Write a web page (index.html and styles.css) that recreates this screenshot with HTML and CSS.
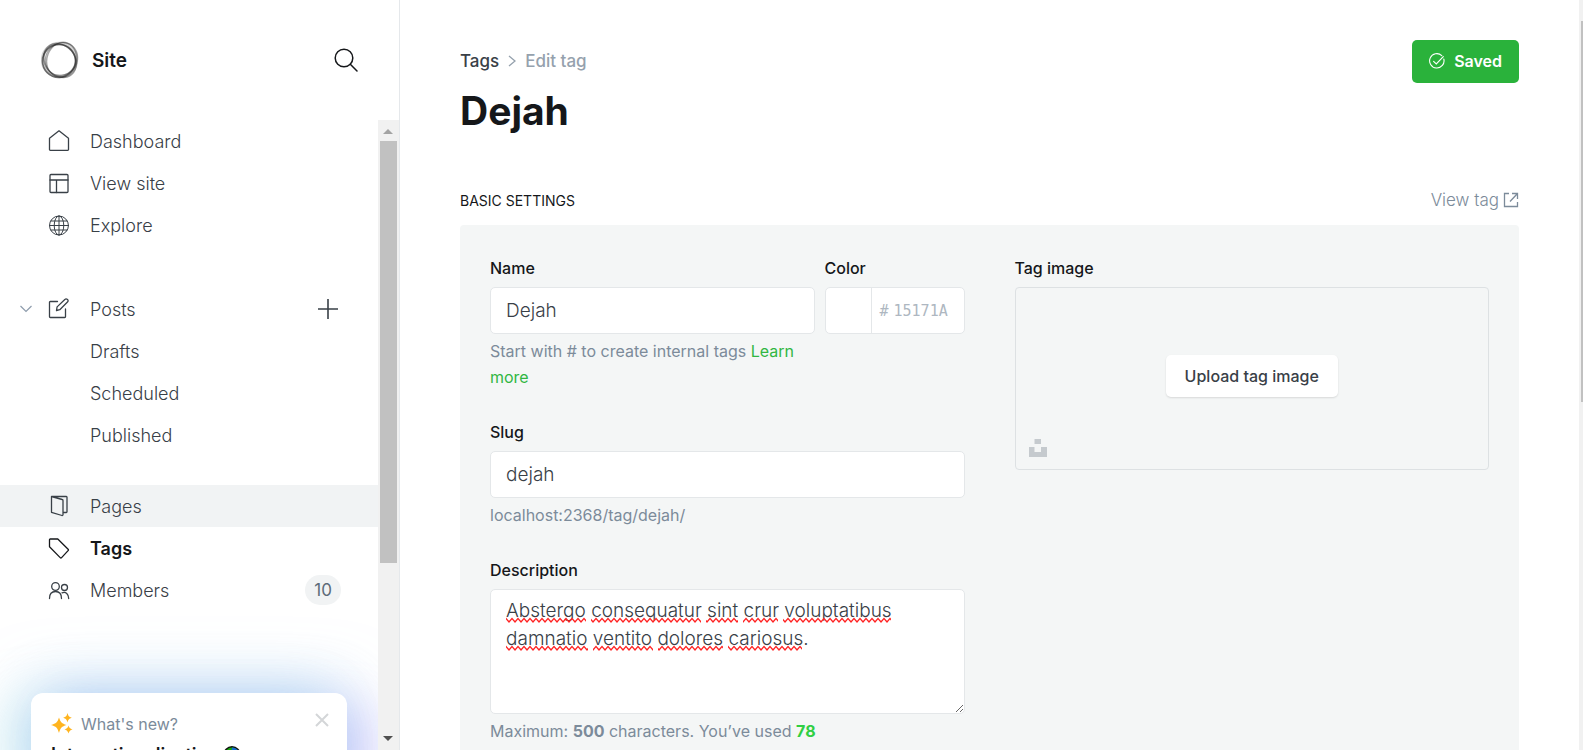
FILE: index.html
```html
<!DOCTYPE html>
<html lang="en">
<head>
<meta charset="utf-8">
<title>Site - Edit tag</title>
<link rel="stylesheet" href="styles.css">
</head>
<body>
<div class="app">
  <aside class="sidebar">
    <header class="sidebar-head">
      <svg class="logo" viewBox="0 0 38 38" aria-hidden="true">
        <g fill="none" stroke="#222">
          <ellipse cx="18" cy="20" rx="16.500" ry="16.500" stroke-width="1.600" opacity=".6"/>
          <ellipse cx="20.500" cy="18" rx="17" ry="15.500" transform="rotate(-48 20.500 18)" stroke-width="1.200" opacity=".4"/>
          <ellipse cx="19" cy="19.500" rx="18" ry="15" transform="rotate(50 19 19.500)" stroke-width="1.600" opacity=".45"/>
          <ellipse cx="20.500" cy="18.500" rx="17.500" ry="14.500" transform="rotate(110 20.500 18.500)" stroke-width="1.400" opacity=".4"/>
          <ellipse cx="18.500" cy="19" rx="17" ry="16.500" stroke-width="3.400" opacity=".2"/>
        </g>
      </svg>
      <span class="site-name">Site</span>
      <button class="icon-btn search" type="button" aria-label="Search">
        <svg width="24" height="24" viewBox="0 0 24 24" fill="none" stroke="#15171a" stroke-width="1.500" stroke-linecap="round"><circle cx="10" cy="10" r="8.800"/><path d="M16.300 16.300 23 23"/></svg>
      </button>
    </header>
    <div class="sidebar-body">
      <div class="nav-scroll">
        <nav>
          <ul class="nav-list">
            <li><a href="#" class="nav-item">
              <svg class="nav-icon" viewBox="0 0 22 22"><path d="M1.500 8.300 11 .800l9.500 7.500v11.200a.8.8 0 0 1-.8.8H2.300a.8.8 0 0 1-.8-.8z"/></svg>
              <span>Dashboard</span></a></li>
            <li><a href="#" class="nav-item">
              <svg class="nav-icon" viewBox="0 0 22 22"><rect x="2" y="2.500" width="18" height="18" rx="1"/><path d="M2 8h18M8.500 8v12.500"/></svg>
              <span>View site</span></a></li>
            <li><a href="#" class="nav-item">
              <svg class="nav-icon thin" viewBox="0 0 22 22"><circle cx="11" cy="11.500" r="9.500"/><ellipse cx="11" cy="11.500" rx="4.800" ry="9.500"/><path d="M1.500 11.500h19M11 2v19M2.800 7h16.400M2.800 16h16.400"/></svg>
              <span>Explore</span></a></li>
          </ul>
          <ul class="nav-list">
            <li class="posts-row">
              <button class="icon-btn" type="button" aria-label="Collapse posts"><svg width="12" height="8" viewBox="0 0 12 8" fill="none" stroke="#8e9cac" stroke-width="1.200"><path d="M.5 1 6 6.500 11.500 1"/></svg></button>
              <a href="#" class="nav-item">
              <svg class="nav-icon" viewBox="0 0 22 22"><path d="M9.500 3.500H2.300a.8.800 0 0 0-.8.8v14.400a.8.800 0 0 0 .8.800h14.400a.8.800 0 0 0 .8-.8V11"/><path d="m8.500 12.500.6-3.600 8-7.700a1.400 1.400 0 0 1 2 0l.6.600a1.400 1.400 0 0 1 0 2l-7.900 7.900z"/></svg>
              <span>Posts</span></a>
              <button class="icon-btn" type="button" aria-label="New post"><svg width="22" height="22" viewBox="0 0 22 22" fill="none" stroke="#394047" stroke-width="1.600"><path d="M11 1v20M1 11h20"/></svg></button>
            </li>
            <li><a href="#" class="nav-item sub">Drafts</a></li>
            <li><a href="#" class="nav-item sub">Scheduled</a></li>
            <li><a href="#" class="nav-item sub">Published</a></li>
          </ul>
          <ul class="nav-list">
            <li><a href="#" class="nav-item hovered">
              <svg class="nav-icon" viewBox="0 0 22 22"><path d="M3.500 1.500h14.800a.7.700 0 0 1 .7.700v14.600a.7.700 0 0 1-.7.700h-3.300M3.500 1.500v15.800l10.500 3.200a.8.800 0 0 0 1-.8V5.500a1 1 0 0 0-.8-1z"/></svg>
              <span>Pages</span></a></li>
            <li><a href="#" class="nav-item current">
              <svg class="nav-icon" viewBox="0 0 22 22"><path d="M1.500 2.700a.7.700 0 0 1 .7-.7h7.600l10.300 10.200a1 1 0 0 1 0 1.400l-6.500 7a1 1 0 0 1-1.400 0L1.500 9.800z"/></svg>
              <span>Tags</span></a></li>
            <li><a href="#" class="nav-item">
              <svg class="nav-icon" viewBox="0 0 22 22"><circle cx="7.500" cy="7.500" r="3.800"/><circle cx="16.500" cy="8.500" r="3"/><path d="M1.500 19.500c0-4.500 2.400-7 6-7s6 2.500 6 7M14 13.800c3.800-1.600 6.700 1.300 6.700 5.700"/></svg>
              <span>Members</span><span class="count">10</span></a></li>
          </ul>
        </nav>
        <section class="news">
          <div class="news-head">
            <svg width="22" height="22" viewBox="0 0 22 22" fill="#ffb41f" aria-hidden="true"><path d="M8 4.500c1.500 4.700 2.800 6 7.500 7.500-4.700 1.500-6 2.800-7.500 8-1.500-5.200-2.800-6.500-8-8 5.200-1.500 6.500-2.800 8-7.500zM16.500 0c.8 3.100 1.600 3.900 4.500 4.800-2.900.9-3.700 1.700-4.500 4.700-.8-3-1.600-3.800-4.500-4.700 2.900-.9 3.700-1.700 4.500-4.800zM17.500 12.500c.7 2.400 1.500 3.200 4 4-2.500.8-3.300 1.600-4 4-.7-2.400-1.500-3.200-4-4 2.500-.8 3.300-1.600 4-4z"/></svg>
            <span>What's new?</span>
            <button class="icon-btn close" type="button" aria-label="Dismiss"><svg width="14" height="14" viewBox="0 0 14 14" fill="none" stroke="#d4d6d8" stroke-width="2"><path d="m1 1 12 12M13 1 1 13"/></svg></button>
          </div>
          <h2 class="news-title">Internationalisation
            <svg width="18" height="18" viewBox="0 0 18 18" aria-hidden="true"><circle cx="9" cy="9" r="8.200" fill="#16a80c" stroke="#111" stroke-width="1.500"/><path d="M9 1.500c4 0 7 2.500 7.500 7l-3 3-2-4-3-2z" fill="#1769d2"/></svg>
          </h2>
        </section>
      </div>
      <div class="scrollbar" aria-hidden="true">
        <svg width="20" height="21" viewBox="0 0 20 21"><path d="M5 14h10l-5-5z" fill="#a3a3a3"/></svg>
        <div class="thumb"></div>
        <svg width="20" height="21" viewBox="0 0 20 21"><path d="M5 7h10l-5 5z" fill="#505050"/></svg>
      </div>
    </div>
  </aside>
  <main class="main">
    <header class="page-head">
      <div>
        <nav class="crumbs" aria-label="Breadcrumb">
          <a href="#">Tags</a>
          <svg width="8" height="12" viewBox="0 0 8 12" fill="none" stroke="#95a1ad" stroke-width="1.300" aria-hidden="true"><path d="m1 1 6 5-6 5"/></svg>
          <span>Edit tag</span>
        </nav>
        <h1 class="page-title">Dejah</h1>
      </div>
      <button class="save" type="button">
        <svg width="16" height="16" viewBox="0 0 16 16" fill="none" stroke="#fff" stroke-width="1.100" stroke-linecap="round" aria-hidden="true"><path d="M14.800 6A7.200 7.200 0 1 1 12.800 2.600M4.600 8.300l2.700 2.700 7-7.300"/></svg>
        <span>Saved</span>
      </button>
    </header>
    <div class="section-head">
      <h2 class="section-title">Basic settings</h2>
      <a href="#" class="view-tag">View tag
        <svg width="16" height="16" viewBox="0 0 16 16" fill="none" stroke="#7c8b9a" stroke-width="1.300" aria-hidden="true"><path d="M6 1.500H1.500v13h13V10M9 1.500h5.500V7M14.500 1.500l-7.500 8"/></svg>
      </a>
    </div>
    <form class="panel">
      <div class="column">
        <div class="name-row">
          <div class="field grow">
            <label for="name">Name</label>
            <input id="name" class="control" type="text" value="Dejah">
            <p class="hint">Start with # to create internal tags <a href="#">Learn more</a></p>
          </div>
          <div class="field color-field">
            <label for="color">Color</label>
            <div class="color-box">
              <span class="swatch"></span>
              <span>#</span>
              <input id="color" type="text" placeholder="15171A">
            </div>
          </div>
        </div>
        <div class="field">
          <label for="slug">Slug</label>
          <input id="slug" class="control" type="text" value="dejah">
          <p class="hint">localhost:2368/tag/dejah/</p>
        </div>
        <div class="field">
          <label for="description">Description</label>
          <div class="area-wrap">
            <textarea id="description" class="control area" spellcheck="false">Abstergo consequatur sint crur voluptatibus damnatio ventito dolores cariosus.</textarea>
            <svg class="spelling" width="400" height="64" aria-hidden="true">
              <defs><pattern id="wave" width="6" height="28" patternUnits="userSpaceOnUse"><path d="M-3 5 0 1.500 3 5 6 1.500 9 5" fill="none" stroke="#f22" stroke-width="1.400"/></pattern></defs>
              <g fill="url(#wave)"><rect y="28" width="80" height="6"/><rect x="85" y="28" width="110" height="6"/><rect x="200" y="28" width="32" height="6"/><rect x="237" y="28" width="35" height="6"/><rect x="277" y="28" width="108" height="6"/>
              <rect y="56" width="82" height="6"/><rect x="87" y="56" width="60" height="6"/><rect x="152" y="56" width="65" height="6"/><rect x="222" y="56" width="74" height="6"/></g>
            </svg>
          </div>
          <p class="hint">Maximum: <b>500</b> characters. You’ve used <b class="used">78</b></p>
        </div>
      </div>
      <div class="column">
        <div class="field">
          <label for="upload">Tag image</label>
          <div class="dropzone">
            <button id="upload" class="upload" type="button">Upload tag image</button>
            <svg class="unsplash" width="18" height="18" viewBox="0 0 18 18" fill="#c5cace" aria-hidden="true"><path d="M5.500 0h6.500v5H5.500zM0 8h5.500v5H12V8h6v10H0z"/></svg>
          </div>
        </div>
      </div>
    </form>
  </main>
  <div class="page-scroll" aria-hidden="true"><div class="page-thumb"></div></div>
</div>
</body>
</html>
```
FILE: styles.css
```css
* { box-sizing: border-box; }
body { margin: 0; background: #fff; color: #15171a; font-family: Inter, "Open Sans", sans-serif; font-size: 16px; }
button, input, textarea { font: inherit; }
a { color: inherit; text-decoration: none; }
h1, h2, p, ul { margin: 0; padding: 0; }
ul { list-style: none; }
svg { display: block; flex: none; }
.icon-btn { display: flex; padding: 0; border: 0; background: none; }

.app { display: flex; height: 100vh; overflow: hidden; }
.sidebar { display: flex; flex-direction: column; flex: 0 0 400px; border-right: 1px solid #e5e8eb; }
.sidebar-head { display: flex; align-items: center; height: 120px; padding: 0 41px; }
.logo { width: 38px; height: 38px; }
.site-name { margin-left: 13px; font-size: 19px; font-weight: 600; }
.search { margin-left: auto; }
.sidebar-body { display: flex; flex: 1; min-height: 0; }
.nav-scroll { flex: 1; overflow: hidden; }
.nav-list { margin-bottom: 29px; }
.nav-list:first-child { margin-bottom: 42px; }
.nav-item { display: flex; align-items: center; height: 42px; padding: 0 37px 0 48px; font-size: 18px; font-weight: 300; color: #394047; }
.nav-icon { width: 22px; height: 22px; margin-right: 20px; fill: none; stroke: #394047; stroke-width: 1.3; stroke-linejoin: round; stroke-linecap: round; }
.nav-icon.thin { stroke-width: 1; }
.sub { padding-left: 90px; }
.posts-row { display: flex; align-items: center; padding-left: 20px; padding-right: 39px; }
.posts-row .nav-item { flex: 1; padding: 0 0 0 16px; }
.hovered { background: #f1f3f4; }
.current { font-weight: 600; color: #15171a; }
.current .nav-icon { stroke: #15171a; }
.count { margin-left: auto; padding: 0 9px; border-radius: 15px; background: #f1f3f4; color: #5d6b79; font-size: 17px; font-weight: 400; line-height: 30px; }
.news { margin: 82px 31px 0; padding: 20px; border-radius: 12px; background: #fff; box-shadow: 0 0 64px rgba(120, 175, 235, .6), -24px 8px 56px rgba(160, 240, 225, .25), 28px 16px 48px rgba(190, 150, 255, .3); }
.news-head { display: flex; align-items: center; gap: 8px; height: 22px; font-size: 16px; font-weight: 400; color: #7c8b9a; }
.close { margin: 0 -2px 8px auto; }
.news-title { display: flex; align-items: center; gap: 4px; margin-top: 7px; font-size: 18px; font-weight: 600; line-height: 26px; }
.scrollbar { display: flex; flex-direction: column; flex: 0 0 21px; background: #f1f1f1; }
.thumb { height: 67%; margin: 0 2px; background: #c1c1c1; }
.scrollbar svg:last-child { margin-top: auto; }

.main { flex: 1; min-width: 0; padding: 40px 60px 0; }
.page-head { display: flex; justify-content: space-between; align-items: flex-start; }
.crumbs { display: flex; align-items: center; gap: 9px; height: 42px; font-size: 17px; font-weight: 500; color: #95a1ad; }
.crumbs a { color: #394047; }
.page-title { font-size: 39px; font-weight: 700; line-height: 58px; }
.save { display: flex; align-items: center; gap: 9px; height: 43px; padding: 0 17px 1px; border: 0; border-radius: 5px; background: #2ab23b; color: #fff; font-weight: 600; }
.section-head { display: flex; align-items: center; justify-content: space-between; height: 32px; margin: 44px 0 9px; }
.section-title { font-size: 14px; font-weight: 400; text-transform: uppercase; }
.view-tag { display: flex; align-items: center; gap: 4px; color: #7c8b9a; font-size: 17px; font-weight: 300; }
.panel { display: flex; gap: 50px; height: 100%; padding: 30px; border-radius: 4px; background: #f4f6f6; }
.column { flex: 1; min-width: 0; }
.field { margin-bottom: 28px; }
.field label { display: block; margin-bottom: 6px; line-height: 26px; font-size: 16px; font-weight: 500; }
.name-row { display: flex; gap: 10px; }
.grow { flex: 1; min-width: 0; }
.color-field { flex: 0 0 140px; min-width: 0; }
.control { display: block; width: 100%; height: 47px; padding: 0 15px; border: 1px solid #e4e7e9; border-radius: 5px; outline: 0; background: #fff; color: #394047; font-size: 19px; font-weight: 300; }
.hint { margin-top: 4px; padding-bottom: 1px; font-size: 16px; font-weight: 400; line-height: 26px; color: #7c8b9a; }
.hint a { color: #30b643; }
.hint b { font-weight: 700; }
.hint .used { color: #30cf43; }
.color-box { display: flex; align-items: center; height: 47px; border: 1px solid #e4e7e9; border-radius: 5px; background: #fff; color: #aeb7c1; font-family: "DejaVu Sans Mono", monospace; font-size: 15px; }
.swatch { align-self: stretch; width: 46px; margin-right: 8px; border-right: 1px solid #e4e7e9; }
.color-box input { flex: 1; min-width: 0; padding: 0 0 0 5px; border: 0; outline: 0; background: none; }
.color-box input::placeholder { color: #aeb7c1; }
.area-wrap { position: relative; }
.area { height: 125px; padding: 7px 15px; line-height: 28px; resize: vertical; }
.spelling { position: absolute; left: 16px; top: 0; pointer-events: none; }
.dropzone { position: relative; display: flex; align-items: center; justify-content: center; height: 183px; border: 1px solid #dde1e3; border-radius: 4px; }
.upload { height: 42px; padding: 0 19px; margin-bottom: 6px; border: 0; border-radius: 5px; background: #fff; color: #394047; font-size: 16px; font-weight: 500; box-shadow: 0 1px 2px rgba(0, 0, 0, .12); }
.unsplash { position: absolute; left: 13px; bottom: 12px; }
.page-scroll { flex: 0 0 4px; padding: 21px 0 0 2px; background: #f1f1f1; }
.page-thumb { height: 381px; background: #c1c1c1; }
```
